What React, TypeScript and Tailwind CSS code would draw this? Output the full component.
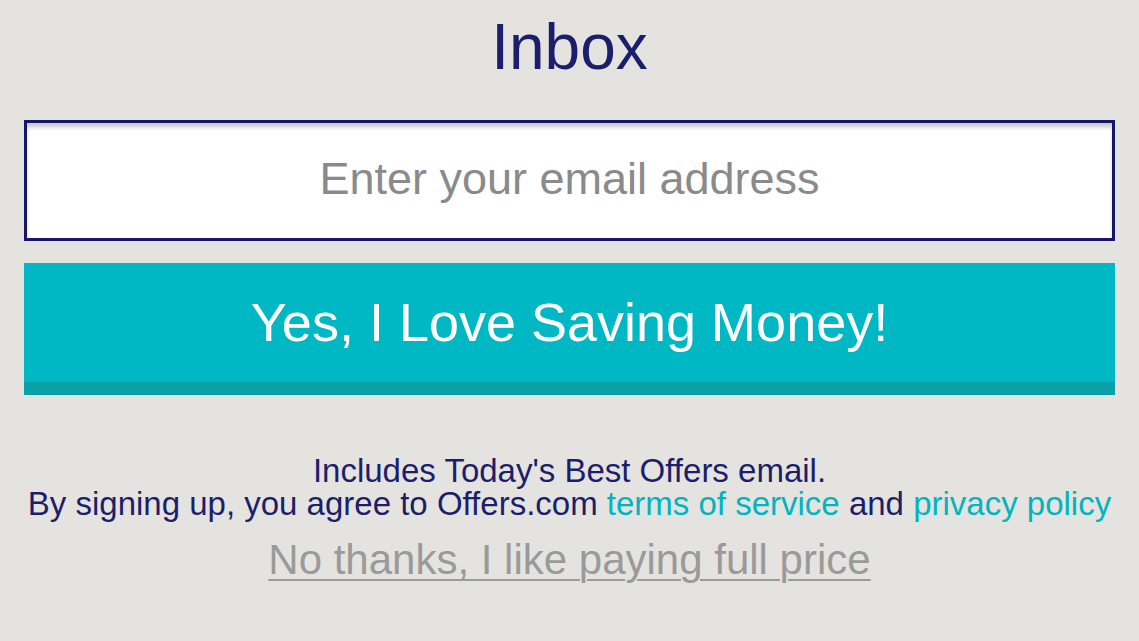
export default function App() {
  return (
    <main
      className="flex h-[641px] w-[1139px] flex-col items-center overflow-hidden bg-[#e5e3e0] px-6"
      style={{ fontFamily: '"Liberation Sans", Arial, sans-serif' }}
    >
      <h1 className="mt-[15px] text-[64px] font-normal leading-[64px] text-[#1b1f6b]">Inbox</h1>

      <input
        type="email"
        placeholder="Enter your email address"
        className="mt-[41px] h-[121px] w-full border-[3px] border-[#16166a] bg-white pb-1 text-center text-[45px] text-[#333] shadow-[inset_0_5px_4px_-1px_rgba(0,0,0,0.22)] outline-none placeholder:text-[#8a8a8a]"
      />

      <button className="mt-[22px] flex h-[132px] w-full items-center justify-center border-b-[13px] border-[#0aa0a8] bg-[#00b8c3] text-[54px] text-white">
        Yes, I Love Saving Money!
      </button>

      <div className="mt-[59px] text-center text-[33px] leading-[33px] text-[#1b1f6b]">
        <p>Includes Today's Best Offers email.</p>
        <p className="whitespace-nowrap">
          By signing up, you agree to Offers.com{" "}
          <a className="text-[#00b5c0]">terms of service</a> and{" "}
          <a className="text-[#00b5c0]">privacy policy</a>
        </p>
      </div>

      <a className="mt-[19px] text-[42px] leading-[42px] text-[#9a9a9a] underline decoration-2 underline-offset-[5px]">
        No thanks, I like paying full price
      </a>
    </main>
  );
}
